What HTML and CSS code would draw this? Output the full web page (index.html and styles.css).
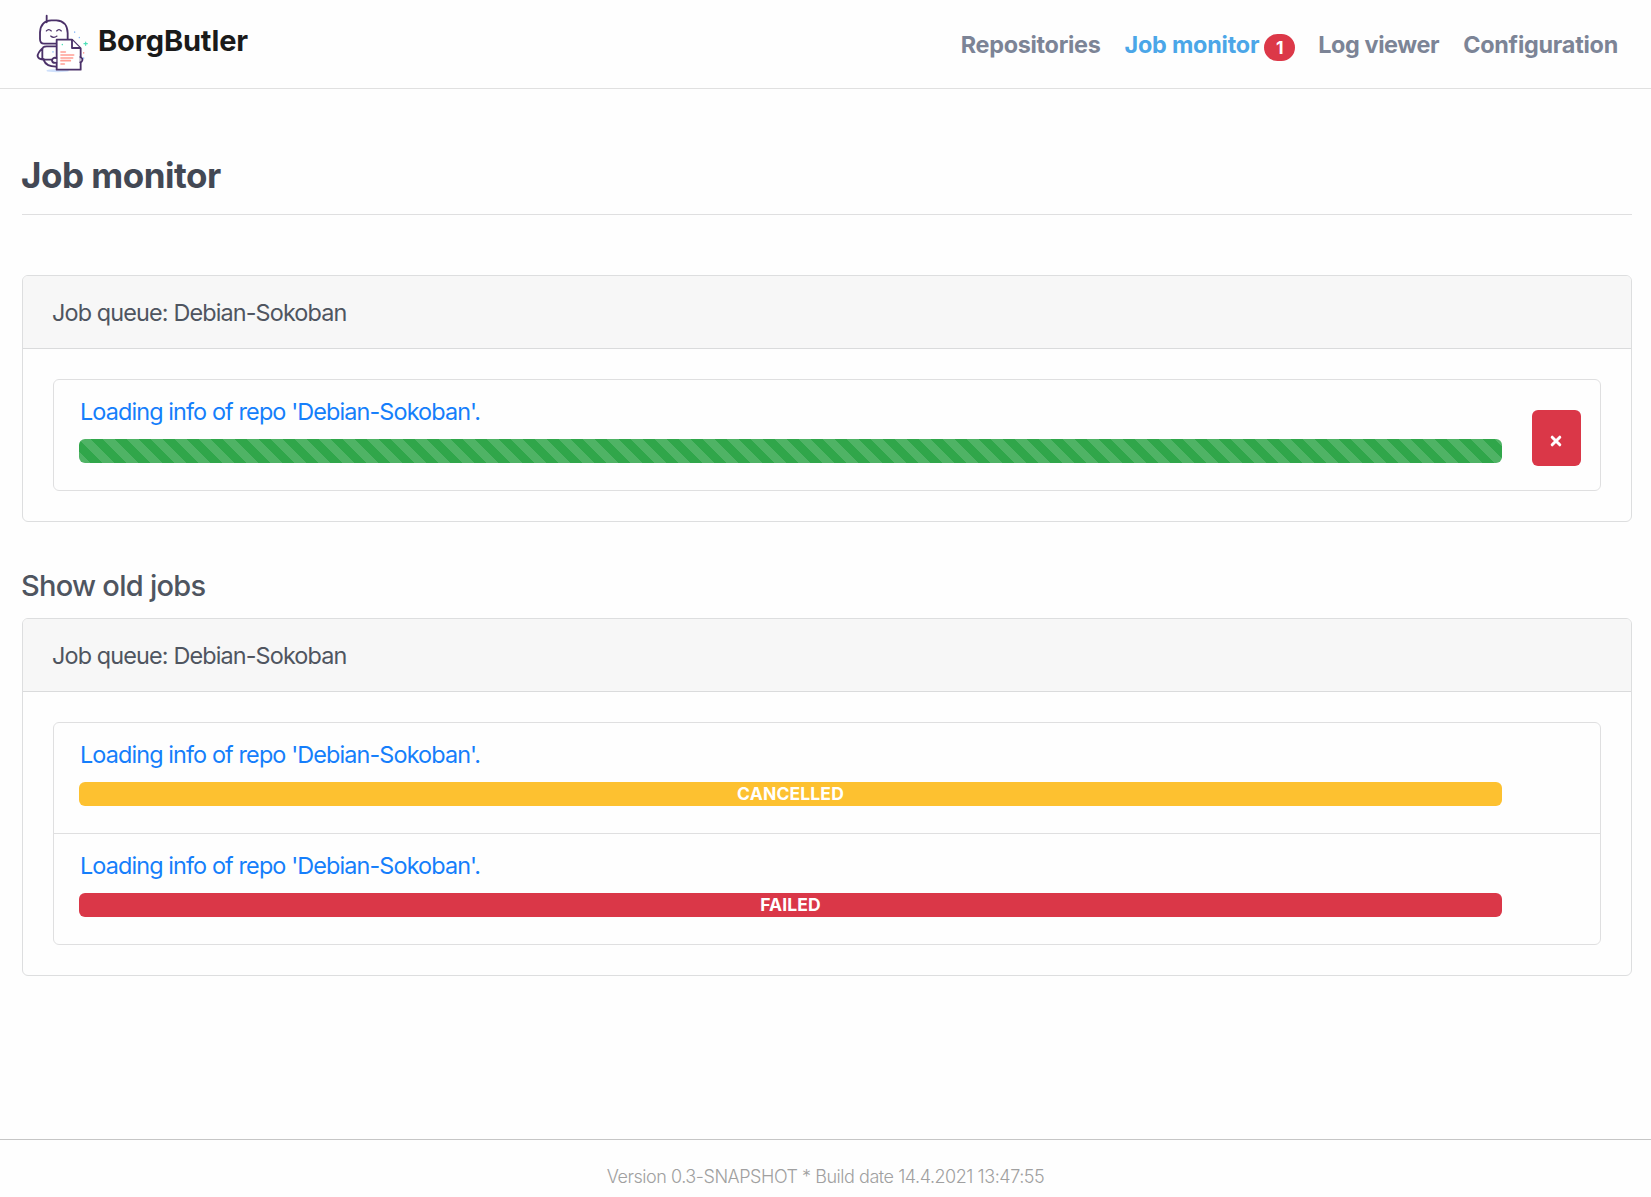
FILE: index.html
```html
<!DOCTYPE html>
<html lang="en">
<head>
<meta charset="utf-8">
<title>BorgButler</title>
<link rel="stylesheet" href="styles.css">
</head>
<body>
<header class="navbar">
  <a class="brand">
    <svg class="logo" width="64" height="70" viewBox="0 0 192 210" fill="none" stroke="#4a3068" stroke-width="5.5" stroke-linecap="round" stroke-linejoin="round">
      <ellipse cx="83" cy="188" rx="34" ry="5" fill="#cfe0fb" stroke="none"/>
      <path d="M50 23V43"/>
      <path d="M78 107H42Q30 107 30 93V73Q32 38 64 37H79Q112 39 113 75V93"/>
      <path d="M49 69Q56 61 64 69M80 69Q87 61 94 69M62 84Q71 92 81 84" stroke-width="3.5"/>
      <path d="M77 115H50Q37 115 37 125V150Q38 154 45 155H65M37 121Q22 135 23 145Q25 153 39 155M42 158Q48 175 78 176"/>
      <path d="M80 95H126L152 121V185H80Z" fill="#fff"/>
      <path d="M126 96V120H150" fill="#fff"/>
      <path d="M79 150Q67 147 66 158Q68 166 79 164M151 147Q159 151 157 157Q156 162 151 163" fill="#fff"/>
      <path d="M93 132H106M93 141H131M93 150H128M93 158H121M93 168H103" stroke="#ff9f94" stroke-width="5"/>
      <path d="M162 107H172M167 102V112" stroke="#4fe0b8" stroke-width="3.5"/>
      <path d="M148 88V89M134 72V73M69 131V132M161 150V151" stroke="#86b8f6" stroke-width="4"/>
      <path d="M161 134V135" stroke="#ff8d82" stroke-width="4"/>
      <path d="M97 109V110" stroke="#4fe0b8" stroke-width="4"/>
    </svg>
    <span class="brand-name">BorgButler</span>
  </a>
  <nav class="nav">
    <a class="nav-link repos">Repositories</a>
    <span class="nav-item"><a class="nav-link active">Job monitor</a><span class="badge">1</span></span>
    <a class="nav-link logs">Log viewer</a>
    <a class="nav-link config">Configuration</a>
  </nav>
</header>
<main class="content">
  <h1 class="page-title"><span>Job monitor</span></h1>
  <section class="card">
    <div class="card-header"><span>Job queue: Debian-Sokoban</span></div>
    <div class="card-body">
      <div class="job-list">
        <div class="job">
          <div class="job-main">
            <a class="job-title">Loading info of repo 'Debian-Sokoban'.</a>
            <div class="progress running"></div>
          </div>
          <button class="cancel" aria-label="Cancel job"><svg width="12" height="12" viewBox="0 0 12 12"><path d="M2.2 2.2L9.8 9.8M9.8 2.2L2.2 9.8" stroke="#fff" stroke-width="3" stroke-linecap="round"/></svg></button>
        </div>
      </div>
    </div>
  </section>
  <h2 class="old-jobs"><span>Show old jobs</span></h2>
  <section class="card">
    <div class="card-header"><span>Job queue: Debian-Sokoban</span></div>
    <div class="card-body">
      <div class="job-list">
        <div class="job">
          <div class="job-main">
            <a class="job-title">Loading info of repo 'Debian-Sokoban'.</a>
            <div class="progress cancelled"><span>CANCELLED</span></div>
          </div>
        </div>
        <div class="job">
          <div class="job-main">
            <a class="job-title">Loading info of repo 'Debian-Sokoban'.</a>
            <div class="progress failed"><span>FAILED</span></div>
          </div>
        </div>
      </div>
    </div>
  </section>
</main>
<footer class="footer"><span>Version 0.3-SNAPSHOT * Build date 14.4.2021 13:47:55</span></footer>
</body>
</html>
```
FILE: styles.css
```css
* { box-sizing: border-box; }
body {
  margin: 0;
  height: 1197px;
  display: flex;
  flex-direction: column;
  background: #fefefe;
  color: #4f5560;
  font-family: Inter, "Liberation Sans", sans-serif;
  font-size: 23.4px;
  line-height: 36px;
  white-space: nowrap;
  overflow: hidden;
}
.navbar {
  height: 89px;
  flex: none;
  display: flex;
  justify-content: space-between;
  padding: 8px 33px 0 30px;
  border-bottom: 1px solid #e0e0e0;
}
.brand { display: flex; gap: 4px; }
.brand-name {
  padding-top: 15px;
  font-size: 29px;
  font-weight: 700;
  letter-spacing: -0.13px;
  color: #1a1a1a;
}
.nav { display: flex; gap: 24px; padding-top: 19px; }
.nav-item { display: flex; gap: 5px; }
.nav-link { font-weight: 700; font-size: 23.4px; letter-spacing: -0.3px; color: #7c8496; }
.active { color: #4ba6e8; letter-spacing: -0.22px; }
.logs { margin-left: -1px; letter-spacing: -0.4px; }
.config { letter-spacing: -0.24px; }
.badge {
  width: 31px;
  height: 27px;
  margin-top: 7px;
  border-radius: 14px;
  background: #dc3848;
  color: #fff;
  font-size: 17.5px;
  font-weight: 700;
  line-height: 27px;
  text-align: center;
}
.content { padding: 59px 19px 0 22px; flex: 1; }
.page-title {
  height: 67px;
  margin: 0 0 60px;
  padding-top: 6px;
  border-bottom: 1px solid #dfdfe0;
  font-size: 35px;
  line-height: 42px;
  font-weight: 700;
  letter-spacing: -0.5px;
  color: #434854;
}
.page-title span, .old-jobs span { margin-left: -1px; }
.card { border: 1px solid #dddedf; border-radius: 6px; overflow: hidden; }
.card-header {
  height: 73px;
  padding: 19px 29px 0;
  background: #f7f7f7;
  border-bottom: 1px solid #dadbdc;
  letter-spacing: -0.86px;
}
.card-body { padding: 30px; }
.job-list { border: 1px solid #dfdfe0; border-radius: 6px; }
.job {
  height: 110px;
  display: flex;
  justify-content: space-between;
  padding: 14px 19px 0 25px;
}
.job + .job { height: 111px; border-top: 1px solid #dfdfe0; }
.job-main { width: 1423px; }
.job-title {
  display: block;
  height: 45px;
  padding-left: 1px;
  color: #157efb;
  letter-spacing: -0.88px;
}
.progress {
  height: 24px;
  border-radius: 6px;
  color: #fff;
  font-size: 17.5px;
  font-weight: 700;
  line-height: 24px;
  letter-spacing: 0.15px;
  text-align: center;
}
.running {
  background: #30a64a linear-gradient(45deg, rgba(255,255,255,.15) 25%, transparent 25%, transparent 50%, rgba(255,255,255,.15) 50%, rgba(255,255,255,.15) 75%, transparent 75%) 0 0 / 24px 24px;
}
.cancelled { background: #fdc130; }
.failed { background: #da3748; }
.cancel {
  width: 49px;
  height: 56px;
  margin-top: 16px;
  padding: 6px 1px 0 0;
  border: 0;
  border-radius: 6px;
  background: #da3748;
  display: flex;
  align-items: center;
  justify-content: center;
}
.old-jobs {
  height: 96px;
  margin: 0;
  padding-top: 46px;
  font-size: 29px;
  font-weight: 500;
  line-height: 36px;
  letter-spacing: -0.73px;
}
.footer {
  height: 58px;
  border-top: 1px solid #c6c6c6;
  padding-top: 19px;
  text-align: center;
  font-size: 18px;
  font-weight: 300;
  letter-spacing: -0.46px;
  color: #a0a0a0;
}
```
